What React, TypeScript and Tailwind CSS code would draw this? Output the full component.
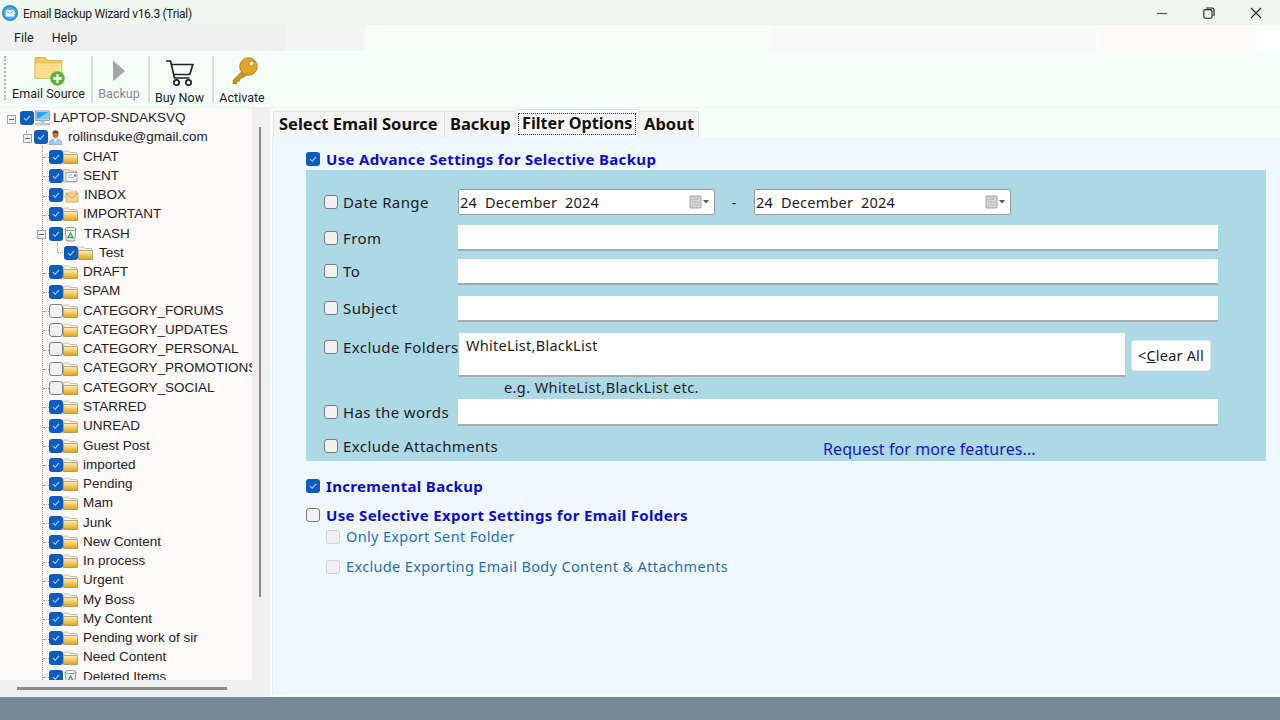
import * as React from 'react';

/* Email Backup Wizard, Filter Options tab. Left mail tree, right filter form. */

const ui = "font-['Noto_Sans',sans-serif]";
const chrome = "font-['Roboto',sans-serif]";
const arial = "font-['Liberation_Sans',Arial,sans-serif]";

type Node = { label: string; on: boolean; icon?: 'folder' | 'sent' | 'inbox' | 'trash' };

const TOP: Node[] = [
  { label: 'CHAT', on: true },
  { label: 'SENT', on: true, icon: 'sent' },
  { label: 'INBOX', on: true, icon: 'inbox' },
  { label: 'IMPORTANT', on: true },
];

const REST: Node[] = [
  { label: 'DRAFT', on: true },
  { label: 'SPAM', on: true },
  { label: 'CATEGORY_FORUMS', on: false },
  { label: 'CATEGORY_UPDATES', on: false },
  { label: 'CATEGORY_PERSONAL', on: false },
  { label: 'CATEGORY_PROMOTIONS', on: false },
  { label: 'CATEGORY_SOCIAL', on: false },
  { label: 'STARRED', on: true },
  { label: 'UNREAD', on: true },
  { label: 'Guest Post', on: true },
  { label: 'imported', on: true },
  { label: 'Pending', on: true },
  { label: 'Mam', on: true },
  { label: 'Junk', on: true },
  { label: 'New Content', on: true },
  { label: 'In process', on: true },
  { label: 'Urgent', on: true },
  { label: 'My Boss', on: true },
  { label: 'My Content', on: true },
  { label: 'Pending work of sir', on: true },
  { label: 'Need Content', on: true },
  { label: 'Deleted Items', on: true, icon: 'trash' },
];

export default function App() {
  return (
    <div className={`flex h-[720px] w-[1280px] flex-col overflow-hidden bg-[#f5fff9] ${ui}`}>
      <TitleBar />
      <MenuBar />
      <Toolbar />
      <div className="flex h-[589px] min-h-0">
        <TreePanel />
        <div className="flex w-[1010px] flex-col pl-[2px] pt-[1px]">
          <Tabs />
          <FilterPage />
        </div>
      </div>
      <div className="h-[23px] bg-[#778899]" />
    </div>
  );
}

function TitleBar() {
  return (
    <div className="flex h-[25px] items-center bg-[#eef6ee] pl-[2px]">
      <svg width="16" height="16" viewBox="0 0 16 16">
        <circle cx="8" cy="8" r="8" fill="#2f8fd8" />
        <circle cx="8" cy="8" r="6" fill="#59aeea" />
        <rect x="3.5" y="5" width="9" height="6.5" rx="1" fill="#f2f8fd" />
        <path d="M3.8 5.5 8 8.6l4.2-3.1" fill="none" stroke="#5a9fd6" strokeWidth="0.8" />
      </svg>
      <span className={`ml-[5px] mt-[2px] text-[12px] leading-none tracking-[-0.3px] text-[#1c1c1c] ${chrome}`}>Email Backup Wizard v16.3 (Trial)</span>
      <div className="ml-auto flex items-center">
        <svg width="12" height="12" viewBox="0 0 12 12" className="mr-[35px]">
          <path d="M1 6.5h10" stroke="#555" strokeWidth="1.2" />
        </svg>
        <svg width="12" height="12" viewBox="0 0 12 12" className="mr-[35px]">
          <rect x="0.8" y="2.6" width="8.2" height="8.6" rx="1.5" fill="none" stroke="#222" strokeWidth="1.1" />
          <path d="M3 1h6.2A1.8 1.8 0 0 1 11 2.8V9" fill="none" stroke="#222" strokeWidth="1.1" />
        </svg>
        <svg width="12" height="12" viewBox="0 0 12 12" className="mr-[18px]">
          <path d="M1 1l10 10M11 1 1 11" stroke="#222" strokeWidth="1.1" />
        </svg>
      </div>
    </div>
  );
}

function MenuBar() {
  return (
    <div className="relative flex h-[26px] bg-[#f0f0f0]">
      <div className={`flex items-center gap-[18px] pl-[14px] pt-[1px] text-[12.5px] text-[#1c1c1c] ${chrome}`}>
        <span>File</span>
        <span>Help</span>
      </div>
      <div className="ml-auto flex">
        <div className="w-[80px] bg-[#f4f4f4]" />
        <div className="w-[405px] bg-[#f8fdf9]" />
        <div className="w-[325px] bg-[#f8f9f8]" />
        <div className="w-[162px] bg-[#fffafa]" />
        <div className="w-[23px] bg-white" />
      </div>
    </div>
  );
}

function Toolbar() {
  return (
    <div className={`flex h-[57px] items-stretch border-b border-[#f0f4f0] pl-[4px] pt-[4px] text-[12.5px] leading-none ${chrome}`}>
      <div className="my-[1px] h-[44px] w-[2px] border-l-2 border-dotted border-[#b4b4b4]" />
      <div className="flex w-[85px] flex-col items-center text-[#1c1c1c]">
        <BigFolder />
        <span className="mt-[1px]">Email Source</span>
      </div>
      <Sep />
      <div className="flex w-[55px] flex-col items-center pr-[3px] text-[#8b8b8b]">
        <svg width="14" height="22" viewBox="0 0 14 22" className="mt-[5px]">
          <path d="M1 0.5 13 11 1 21.5Z" fill="#a6a6a6" />
        </svg>
        <span className="mt-[6px]">Backup</span>
      </div>
      <Sep />
      <div className="flex w-[62px] flex-col items-center pr-[3px] text-[#1c1c1c]">
        <svg width="30" height="28" viewBox="0 0 30 28" className="mt-[4px]" fill="none" stroke="#222" strokeWidth="1.7">
          <path d="M1 2h4.5l4 17h15" />
          <path d="M6.3 5.5h21.5l-3 10H8.6" />
          <circle cx="11.5" cy="23.5" r="2.7" />
          <circle cx="23.5" cy="23.5" r="2.7" />
        </svg>
        <span className="mt-[5px]">Buy Now</span>
      </div>
      <Sep />
      <div className="flex w-[60px] flex-col items-center pr-[4px] text-[#1c1c1c]">
        <svg width="26" height="28" viewBox="0 0 26 28" className="ml-[6px] mt-[2px]">
          <path d="M13 11 1 23.5v3l3.5.5.6-2.6 2.6-.4.4-2.6 2.4-.4L18.5 15Z" fill="#cf9420" stroke="#9a6a10" strokeWidth="0.6" />
          <circle cx="16.5" cy="9.5" r="8.8" fill="#e2a52c" stroke="#a8720f" strokeWidth="0.8" />
          <circle cx="19.5" cy="6.5" r="2.6" fill="#fbeecb" stroke="#9a6a10" strokeWidth="0.7" />
        </svg>
        <span className="mt-[7px]">Activate</span>
      </div>
    </div>
  );
}

function Sep() {
  return <div className="my-[1px] h-[47px] w-[2px] bg-[#dcdcdc]" />;
}

function BigFolder() {
  return (
    <svg width="32" height="32" viewBox="0 0 30 30" className="ml-[2px]">
      <path d="M1 2.5h10l2 2.5h13v17H1Z" fill="#f0c860" stroke="#d8a840" strokeWidth="0.8" />
      <path d="M1 7.5h25v14.5H1Z" fill="#fbe08e" stroke="#e0b450" strokeWidth="0.6" />
      <path d="M3 10h20M3 13h20M3 16h15M3 19h13" stroke="#f2cb6c" strokeWidth="0.6" strokeDasharray="1 1" />
      <circle cx="22" cy="22" r="6.8" fill="#5cb338" />
      <path d="M22 18v8M18 22h8" stroke="#fff" strokeWidth="2.2" />
    </svg>
  );
}

/* ------------------------------------------------------------------ tree */

function TreePanel() {
  return (
    <div className="relative flex w-[270px] flex-col bg-[#f0f0f0]">
      <div className={`relative h-[572px] w-[252px] overflow-hidden rounded-br-[3px] bg-[#fffafa] pt-[0.5px] text-[13.5px] text-[#222] ${arial}`}>
        {/* dotted guide lines of the tree */}
        <div className="absolute left-[26px] top-[23px] h-[12px] border-l border-dotted border-[#999]" />
        <div className="absolute left-[42px] top-[38px] h-[540px] border-l border-dotted border-[#999]" />
        <TreeRow pad="pl-[20px]" label="LAPTOP-SNDAKSVQ" on icon={<Computer />} expander="left-[7px]" gap="ml-[3px]" />
        <TreeRow pad="pl-[34px]" label="rollinsduke@gmail.com" on icon={<Person />} expander="left-[23px]" gap="ml-[5px]" />
        {TOP.map((n) => (
          <Leaf key={n.label} node={n} />
        ))}
        <TreeRow pad="pl-[49px]" label="TRASH" on icon={<Bin />} expander="left-[37px]" gap="ml-[6px]" />
        <div className="relative">
          <div className="absolute left-[57px] top-[0px] h-[10px] w-[8px] border-b border-l border-dotted border-[#999]" />
          <TreeRow pad="pl-[64px]" label="Test" on icon={<Folder />} gap="ml-[6px]" />
        </div>
        {REST.map((n) => (
          <Leaf key={n.label} node={n} />
        ))}
      </div>
      <div className="absolute left-[259px] top-[19px] h-[470px] w-[2px] bg-[#8a8a8a]" />
      <div className="ml-[17px] mt-[7px] h-[3px] w-[210px] bg-[#8a8a8a]" />
    </div>
  );
}

function Leaf({ node }: { node: Node }) {
  const icon =
    node.icon === 'sent' ? <Sent /> : node.icon === 'inbox' ? <Inbox /> : node.icon === 'trash' ? <Bin /> : <Folder />;
  return (
    <div className="relative">
      <div className="absolute left-[43px] top-[10px] w-[6px] border-t border-dotted border-[#999]" />
      <TreeRow pad="pl-[49px]" label={node.label} on={node.on} icon={icon} gap="ml-[5px]" />
    </div>
  );
}

function TreeRow({
  pad,
  label,
  on,
  icon,
  expander,
  gap,
}: {
  pad: string;
  label: string;
  on: boolean;
  icon: React.ReactNode;
  expander?: string;
  gap: string;
}) {
  return (
    <div className={`relative flex h-[19.28px] items-center whitespace-nowrap ${pad}`}>
      {expander && (
        <div className={`absolute top-[6px] flex h-[9px] w-[9px] items-center justify-center border border-[#9aa3ad] bg-[#eef0f3] ${expander}`}>
          <div className="h-px w-[5px] bg-[#5b6470]" />
        </div>
      )}
      <Check on={on} />
      {icon}
      <span className={gap}>{label}</span>
    </div>
  );
}

function Check({ on, faint }: { on: boolean; faint?: boolean }) {
  if (on) {
    return (
      <span className="flex h-[14px] w-[14px] shrink-0 items-center justify-center rounded-[3px] bg-[#0b5cbd]">
        <svg width="8" height="8" viewBox="0 0 8 8" fill="none" stroke="#b9d4f2" strokeWidth="1.1">
          <path d="M1 4.2 3.2 6.3 7 1.8" />
        </svg>
      </span>
    );
  }
  return (
    <span
      className={
        'block h-[14px] w-[14px] shrink-0 rounded-[3px] border bg-[#f1f1f1] ' +
        (faint ? 'border-[#d0d0d0]' : 'border-[#7d7d7d]')
      }
    />
  );
}

function Folder() {
  return (
    <svg width="15" height="14" viewBox="0 0 15 14" className="shrink-0">
      <defs>
        <linearGradient id="fold" x1="0" y1="0" x2="0" y2="1">
          <stop offset="0" stopColor="#fff0b8" />
          <stop offset="1" stopColor="#e2a010" />
        </linearGradient>
      </defs>
      <path d="M0.5 2.5 1.5 1h4l1.5 1.5h7v3h-13Z" fill="#f4f2e4" stroke="#a8a088" strokeWidth="0.6" />
      <path d="M0.5 4.5h14v9h-14Z" fill="url(#fold)" stroke="#8c7a44" strokeWidth="0.6" />
    </svg>
  );
}

function Sent() {
  return (
    <svg width="15" height="15" viewBox="0 0 15 15" className="shrink-0">
      <path d="M0.5 1.5h5l1 1.5h7v11h-13Z" fill="#f4e6b4" stroke="#998a58" strokeWidth="0.6" />
      <rect x="3" y="4.5" width="11" height="9" fill="#eef2fa" stroke="#6f7fa0" strokeWidth="0.6" />
      <path d="M5 7h4M5 9.5h6" stroke="#8f9cb8" strokeWidth="0.7" />
      <path d="M11 6.5h2v2h-2Z" fill="#c85a4a" />
    </svg>
  );
}

function Inbox() {
  return (
    <svg width="16" height="15" viewBox="0 0 16 15" className="shrink-0">
      <path d="M0.5 1.5h5l1 1.5h7v6h-13Z" fill="#f4f2e4" stroke="#a8a088" strokeWidth="0.6" />
      <rect x="3" y="5" width="12" height="9" fill="#f8d98a" stroke="#b58c30" strokeWidth="0.6" />
      <path d="M3 5.5 9 10l6-4.5" fill="none" stroke="#b58c30" strokeWidth="0.7" />
    </svg>
  );
}

function Bin() {
  return (
    <svg width="15" height="16" viewBox="0 0 15 16" className="shrink-0">
      <path d="M2 3h11l-1.4 12H3.4Z" fill="#eef1f3" stroke="#6d7780" strokeWidth="0.8" />
      <ellipse cx="7.5" cy="3" rx="5.5" ry="1.6" fill="#fafafa" stroke="#6d7780" strokeWidth="0.8" />
      <path d="M7.5 7 10 11.5H5Z" fill="none" stroke="#3da33d" strokeWidth="1.3" />
    </svg>
  );
}

function Computer() {
  return (
    <svg width="16" height="16" viewBox="0 0 17 16" className="shrink-0">
      <rect x="1.5" y="0.5" width="15" height="10" fill="#e4e8ee" stroke="#5d7fa8" strokeWidth="0.7" />
      <rect x="2.7" y="1.7" width="12.6" height="7.6" fill="#2f9fe8" />
      <path d="M2.7 9.3 15.3 1.7v7.6Z" fill="#7ccbf5" />
      <path d="M7 11h4v2H7Z" fill="#b9c2cc" />
      <path d="M1 13.5h16v2H1Z" fill="#cbd3dc" stroke="#8a98a8" strokeWidth="0.4" />
    </svg>
  );
}

function Person() {
  return (
    <svg width="15" height="16" viewBox="0 0 15 16" className="shrink-0">
      <path d="M1 15.5c0-4 2.5-5.5 6.5-5.5s6.5 1.5 6.5 5.5Z" fill="#a9c9ea" stroke="#6f8fb4" strokeWidth="0.5" />
      <path d="M6 9.5 7.5 14 9 9.5Z" fill="#f4f4f4" />
      <ellipse cx="7.5" cy="5" rx="3" ry="4" fill="#b8763c" />
      <path d="M4.5 4.5C4.5 1.5 10.5 1.5 10.5 4.5 9 3.5 6 3.5 4.5 4.5Z" fill="#4a2c14" />
    </svg>
  );
}

/* ------------------------------------------------------------------ right side */

function Tabs() {
  const base = 'flex items-center whitespace-nowrap border-t border-r border-[#e2e2e2] bg-[#f4f4f4] font-bold text-[#111]';
  return (
    <div className="flex h-[28px] items-end pl-[1px] text-[16.5px] leading-none">
      <div className={`${base} h-[26px] w-[172px] border-l pl-[5px]`}>Select Email Source</div>
      <div className={`${base} h-[26px] w-[71px] pl-[5px]`}>Backup</div>
      <div className={`${base} h-[28px] w-[123px] bg-[#fafafa] p-[2px]`}>
        <span className="flex h-[22px] w-full items-center border border-dotted border-[#333] pb-[1px] pl-[3px] text-[16.2px]">Filter Options</span>
      </div>
      <div className={`${base} h-[26px] w-[60px] pl-[5px]`}>About</div>
    </div>
  );
}

function Heading({ children }: { children: React.ReactNode }) {
  return <span className="text-[15px] font-bold leading-none tracking-[0.33px] text-[#0c0ccf]">{children}</span>;
}

function FilterPage() {
  return (
    <div className="flex h-[558px] flex-col border-l border-[#e6eef5] bg-[#f0f8ff] pl-[33px] text-[#1c1c1c]">
      <div className="flex h-[33px] items-center gap-[6px] pt-[11px]">
        <Check on />
        <Heading>Use Advance Settings for Selective Backup</Heading>
      </div>
      <Form />
      <div className="mt-[17px] flex h-[16px] items-center gap-[6px]">
        <Check on />
        <Heading>Incremental Backup</Heading>
      </div>
      <div className="mt-[13px] flex h-[16px] items-center gap-[6px]">
        <Check on={false} />
        <Heading>Use Selective Export Settings for Email Folders</Heading>
      </div>
      <div className="ml-[20px] mt-[6px] flex h-[16px] items-center gap-[6px] text-[14.5px] tracking-[0.35px] text-[#1f6fbd]">
        <Check on={false} faint />
        <span>Only Export Sent Folder</span>
      </div>
      <div className="ml-[20px] mt-[14px] flex h-[16px] items-center gap-[6px] text-[14.5px] tracking-[0.35px] text-[#1f6fbd]">
        <Check on={false} faint />
        <span>Exclude Exporting Email Body Content &amp; Attachments</span>
      </div>
    </div>
  );
}

function Field({ className }: { className: string }) {
  return <div className={`border-b-2 border-[#a8a8a8] bg-white ${className}`} />;
}

function Row({
  label,
  className,
  labelH = 'h-[26px]',
  children,
}: {
  label: string;
  className: string;
  labelH?: string;
  children: React.ReactNode;
}) {
  return (
    <div className={`flex items-start ${className}`}>
      <div className={`flex w-[152px] shrink-0 items-center gap-[5px] pl-[18px] text-[15px] tracking-[0.4px] ${labelH}`}>
        <Check on={false} />
        <span className="whitespace-nowrap">{label}</span>
      </div>
      {children}
    </div>
  );
}

function DateBox() {
  return (
    <div className="flex h-[26px] w-[257px] items-center justify-between rounded-[2px] border border-[#9a9a9a] bg-white pl-[1px] pr-[3px] text-[14.5px] tracking-[0.2px] [word-spacing:4px]">
      <span className="pt-[1px]">24 December 2024</span>
      <svg width="22" height="14" viewBox="0 0 22 14">
        <rect x="1" y="1" width="11" height="12" rx="1" fill="#d8d8d8" stroke="#8a8a8a" strokeWidth="0.8" />
        <path d="M3 4h7M3 7h7M3 10h7" stroke="#a8a8a8" strokeWidth="0.8" />
        <path d="M14 5h6l-3 3.5Z" fill="#4a5a78" />
      </svg>
    </div>
  );
}

function Form() {
  return (
    <div className="h-[291px] w-[960px] bg-[#add8e6] pt-[19px]">
      <Row label="Date Range" className="">
        <DateBox />
        <span className="ml-[14px] mr-[15px] flex h-[26px] w-[10px] items-center justify-center text-[14px]">-</span>
        <DateBox />
      </Row>
      <Row label="From" className="mt-[10px]">
        <Field className="h-[26px] w-[760px]" />
      </Row>
      <Row label="To" className="mt-[8px]" labelH="h-[24px]">
        <Field className="h-[26px] w-[760px]" />
      </Row>
      <Row label="Subject" className="mt-[11px]" labelH="h-[24px]">
        <Field className="h-[26px] w-[760px]" />
      </Row>
      <Row label="Exclude Folders" className="mt-[11px]" labelH="h-[28px]">
        <div className="ml-[1px] h-[44px] w-[666px] border-b-2 border-[#a8a8a8] bg-white pl-[7px] pt-[2px] text-[14.5px] tracking-[0.27px]">WhiteList,BlackList</div>
        <button type="button" className="ml-[6px] mt-[7px] h-[31px] w-[80px] rounded-[3px] border border-[#e4e4e4] bg-white text-[14.5px] tracking-[0.2px]">
          &lt;<span className="underline">C</span>lear All
        </button>
      </Row>
      <div className="h-[22px] pl-[198px] text-[14.5px] leading-[20px] tracking-[0.4px]">e.g. WhiteList,BlackList etc.</div>
      <Row label="Has the words" className="">
        <Field className="h-[27px] w-[760px]" />
      </Row>
      <Row label="Exclude Attachments" className="mt-[7px]">
        <span className="ml-[365px] mt-[4px] text-[16px] tracking-[0.08px] text-[#1616d0]">Request for more features...</span>
      </Row>
    </div>
  );
}
